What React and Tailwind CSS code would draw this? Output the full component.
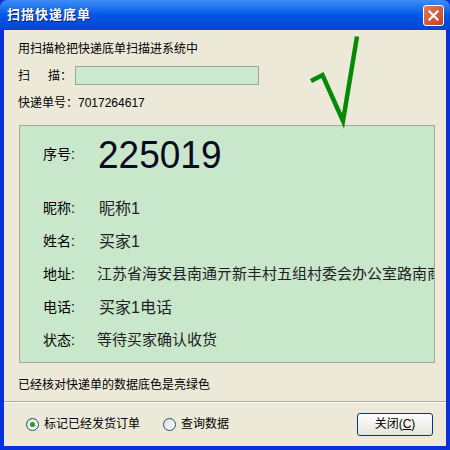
import React from 'react';

const font = { fontFamily: '"Liberation Sans", "Noto Sans CJK SC", sans-serif' };

function Radio({ checked, label }) {
  return (
    <label className="flex items-center gap-[5px] text-[12px] leading-[16px] text-black">
      <span className="w-[13px] h-[13px] rounded-full border border-[#1C5180] bg-gradient-to-br from-[#DCDCD7] to-white flex items-center justify-center">
        {checked && <span className="w-[5px] h-[5px] rounded-full bg-[#21A121]" />}
      </span>
      {label}
    </label>
  );
}

function Row({ label, value, valueClass = 'text-[15px]' }) {
  return (
    <div className="flex items-center h-[33px] whitespace-nowrap">
      <span className="w-[56px] shrink-0 text-[14px] text-black">{label}</span>
      <span className={`${valueClass} text-[#222]`}>{value}</span>
    </div>
  );
}

export default function App() {
  return (
    <div className="relative w-[450px] h-[450px] flex flex-col bg-[#0831D9] overflow-hidden" style={font}>
      {/* Title bar */}
      <div className="h-[30px] shrink-0 flex items-center justify-between pl-[7px] pr-[6px] rounded-t-[7px] bg-gradient-to-b from-[#3D8DF5] via-[#0058E6] to-[#0044CF]">
        <span className="text-white font-bold text-[13px] tracking-[1px] [text-shadow:1px_1px_0_#0A1E6E]">扫描快递底单</span>
        <button className="w-[21px] h-[21px] rounded-[3px] border border-white bg-gradient-to-br from-[#E8795A] to-[#C4401B] flex items-center justify-center">
          <svg width="11" height="11" viewBox="0 0 11 11">
            <path d="M1.5 1.5 L9.5 9.5 M9.5 1.5 L1.5 9.5" stroke="white" strokeWidth="2.2" strokeLinecap="square" />
          </svg>
        </button>
      </div>

      {/* Body */}
      <div className="flex-1 mx-[4px] mb-[4px] bg-[#ECE9D8] flex flex-col">
        <div className="pl-[14px] pt-[11px] text-[12px] leading-[16px] text-black">用扫描枪把快递底单扫描进系统中</div>

        <div className="mt-[9px] pl-[14px] flex items-center h-[19px] text-[12px] text-black">
          <span className="w-[57px] flex justify-between pr-[3px]"><span>扫</span><span>描：</span></span>
          <div className="w-[184px] h-[19px] bg-[#CCE8CF] border border-[#9AA69A]" />
        </div>

        <div className="mt-[10px] pl-[14px] text-[12px] leading-[16px] text-black">快递单号：7017264617</div>

        <div className="mt-[14px] ml-[15px] w-[416px] h-[238px] bg-[#C9E7CB] border border-[#A3A8A0] overflow-hidden pl-[23px] flex flex-col">
          <div className="flex items-center h-[56px]">
            <span className="w-[55px] shrink-0 text-[14px] text-black">序号:</span>
            <span className="text-[37px] leading-none text-[#0A0A20] scale-y-[1.07] origin-center" style={{ fontFamily: '"Liberation Sans", sans-serif' }}>225019</span>
          </div>
          <div className="mt-[10px]">
            <Row label="昵称:" value="昵称1" valueClass="text-[16px]" />
            <Row label="姓名:" value="买家1" valueClass="text-[16px]" />
            <Row label="地址:" value="江苏省海安县南通亓新丰村五组村委会办公室路南商" valueClass="text-[15px] -ml-[2px]" />
            <Row label="电话:" value="买家1电话" valueClass="text-[16px]" />
            <Row label="状态:" value="等待买家确认收货" valueClass="text-[15px] -ml-[2px]" />
          </div>
        </div>

        <div className="mt-[14px] pl-[14px] text-[12px] leading-[16px] text-black">已经核对快递单的数据底色是亮绿色</div>

        <div className="mt-[8px] flex-1 border-t border-[#ACA899] shadow-[inset_0_1px_0_#fff] flex items-center pl-[22px] pr-[13px]">
          <Radio checked label="标记已经发货订单" />
          <div className="ml-[23px]">
            <Radio label="查询数据" />
          </div>
          <button className="ml-auto w-[76px] h-[23px] rounded-[3px] border border-[#003C74] bg-gradient-to-b from-white to-[#E6E4DA] text-[12px] text-black flex items-center justify-center">
            关闭(<span className="underline">C</span>)
          </button>
        </div>
      </div>

      {/* Green tick drawn over the form */}
      <svg className="absolute left-[300px] top-[30px]" width="70" height="100" viewBox="0 0 70 100">
        <path d="M11 51 L22.5 45 L43 91 L57 6.5" fill="none" stroke="#058A05" strokeWidth="4.5" strokeLinejoin="miter" />
      </svg>
    </div>
  );
}
